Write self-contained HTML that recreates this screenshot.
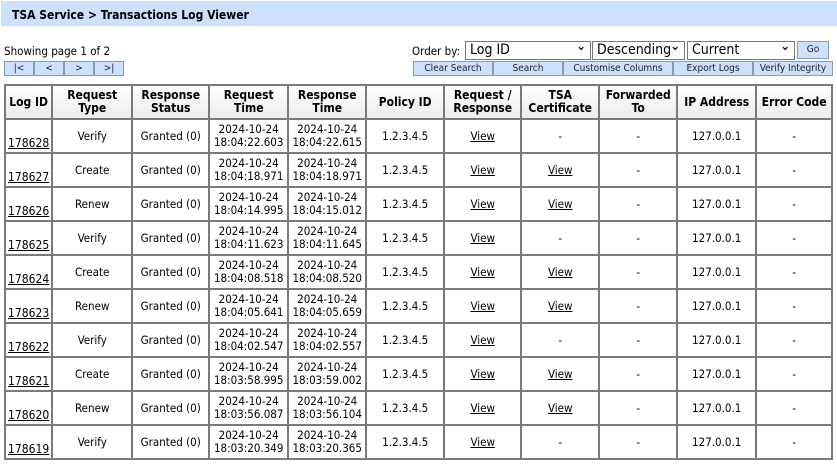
<!DOCTYPE html>
<html><head><meta charset="utf-8"><style>
*{box-sizing:border-box}
body{margin:0;width:837px;height:464px;overflow:hidden;background:#fff;font-family:Tahoma,"DejaVu Sans Condensed","Liberation Sans",sans-serif;font-size:11px;color:#000}
.hdr{position:absolute;left:1px;top:1px;width:836px;height:25px;background:#cde0fc;font-weight:bold;font-size:12px;padding:7px 0 0 11px}
.abs{position:absolute}
.btn{position:absolute;height:15px;background:#cde0fc;border:1px solid #8a9ab0;font-size:10px;text-align:center;line-height:13px;color:#223}
.sel{position:absolute;top:41px;height:19px;border:1px solid #777;background:#fff;font-size:14px;line-height:17px;padding-left:4px}
.sel:after{content:"⌄";position:absolute;right:4px;top:-4px;font-weight:bold;font-size:13px}
table{position:absolute;left:4px;top:84px;width:829px;border-collapse:collapse;border:2px solid #7a7a7a}
td,th{border:2px solid #7a7a7a;text-align:center;padding:0 2px;font-size:11.5px;line-height:13px}
th{height:34px;background:linear-gradient(#fff,#ececec);font-weight:bold;font-size:12px}
td{height:34px}
td.id{vertical-align:bottom;padding-bottom:2px;font-size:12px}
a{color:#000;text-decoration:underline}
</style></head><body>
<div class="hdr">TSA Service &gt; Transactions Log Viewer</div>
<div class="abs" style="left:4px;top:44px;font-size:11.5px">Showing page 1 of 2</div>
<div class="btn" style="left:4px;top:61px;width:30px">|&lt;</div>
<div class="btn" style="left:34px;top:61px;width:30px">&lt;</div>
<div class="btn" style="left:64px;top:61px;width:30px">&gt;</div>
<div class="btn" style="left:94px;top:61px;width:30px">&gt;|</div>
<div class="abs" style="left:412px;top:44px;font-size:11.5px">Order by:</div>
<div class="sel" style="left:465px;width:126px">Log ID</div>
<div class="sel" style="left:592px;width:93px">Descending</div>
<div class="sel" style="left:687px;width:108px">Current</div>
<div class="btn" style="left:797px;top:41px;width:32px;height:18px;line-height:16px">Go</div>
<div class="btn" style="left:413px;top:61px;width:80px">Clear Search</div>
<div class="btn" style="left:493px;top:61px;width:70px">Search</div>
<div class="btn" style="left:563px;top:61px;width:110px">Customise Columns</div>
<div class="btn" style="left:673px;top:61px;width:80px">Export Logs</div>
<div class="btn" style="left:753px;top:61px;width:80px">Verify Integrity</div>
<table>
<tr><th style="width:46px">Log ID</th><th style="width:80px">Request<br>Type</th><th style="width:77px">Response<br>Status</th><th style="width:79px">Request<br>Time</th><th style="width:78px">Response<br>Time</th><th style="width:78px">Policy ID</th><th style="width:77px">Request /<br>Response</th><th style="width:78px">TSA<br>Certificate</th><th style="width:78px">Forwarded<br>To</th><th style="width:79px">IP Address</th><th>Error Code</th></tr>
<tr><td class="id"><a>178628</a></td><td>Verify</td><td>Granted (0)</td><td>2024-10-24<br>18:04:22.603</td><td>2024-10-24<br>18:04:22.615</td><td>1.2.3.4.5</td><td><a>View</a></td><td>-</td><td>-</td><td>127.0.0.1</td><td>-</td></tr>
<tr><td class="id"><a>178627</a></td><td>Create</td><td>Granted (0)</td><td>2024-10-24<br>18:04:18.971</td><td>2024-10-24<br>18:04:18.971</td><td>1.2.3.4.5</td><td><a>View</a></td><td><a>View</a></td><td>-</td><td>127.0.0.1</td><td>-</td></tr>
<tr><td class="id"><a>178626</a></td><td>Renew</td><td>Granted (0)</td><td>2024-10-24<br>18:04:14.995</td><td>2024-10-24<br>18:04:15.012</td><td>1.2.3.4.5</td><td><a>View</a></td><td><a>View</a></td><td>-</td><td>127.0.0.1</td><td>-</td></tr>
<tr><td class="id"><a>178625</a></td><td>Verify</td><td>Granted (0)</td><td>2024-10-24<br>18:04:11.623</td><td>2024-10-24<br>18:04:11.645</td><td>1.2.3.4.5</td><td><a>View</a></td><td>-</td><td>-</td><td>127.0.0.1</td><td>-</td></tr>
<tr><td class="id"><a>178624</a></td><td>Create</td><td>Granted (0)</td><td>2024-10-24<br>18:04:08.518</td><td>2024-10-24<br>18:04:08.520</td><td>1.2.3.4.5</td><td><a>View</a></td><td><a>View</a></td><td>-</td><td>127.0.0.1</td><td>-</td></tr>
<tr><td class="id"><a>178623</a></td><td>Renew</td><td>Granted (0)</td><td>2024-10-24<br>18:04:05.641</td><td>2024-10-24<br>18:04:05.659</td><td>1.2.3.4.5</td><td><a>View</a></td><td><a>View</a></td><td>-</td><td>127.0.0.1</td><td>-</td></tr>
<tr><td class="id"><a>178622</a></td><td>Verify</td><td>Granted (0)</td><td>2024-10-24<br>18:04:02.547</td><td>2024-10-24<br>18:04:02.557</td><td>1.2.3.4.5</td><td><a>View</a></td><td>-</td><td>-</td><td>127.0.0.1</td><td>-</td></tr>
<tr><td class="id"><a>178621</a></td><td>Create</td><td>Granted (0)</td><td>2024-10-24<br>18:03:58.995</td><td>2024-10-24<br>18:03:59.002</td><td>1.2.3.4.5</td><td><a>View</a></td><td><a>View</a></td><td>-</td><td>127.0.0.1</td><td>-</td></tr>
<tr><td class="id"><a>178620</a></td><td>Renew</td><td>Granted (0)</td><td>2024-10-24<br>18:03:56.087</td><td>2024-10-24<br>18:03:56.104</td><td>1.2.3.4.5</td><td><a>View</a></td><td><a>View</a></td><td>-</td><td>127.0.0.1</td><td>-</td></tr>
<tr><td class="id"><a>178619</a></td><td>Verify</td><td>Granted (0)</td><td>2024-10-24<br>18:03:20.349</td><td>2024-10-24<br>18:03:20.365</td><td>1.2.3.4.5</td><td><a>View</a></td><td>-</td><td>-</td><td>127.0.0.1</td><td>-</td></tr>
</table>
</body></html>
